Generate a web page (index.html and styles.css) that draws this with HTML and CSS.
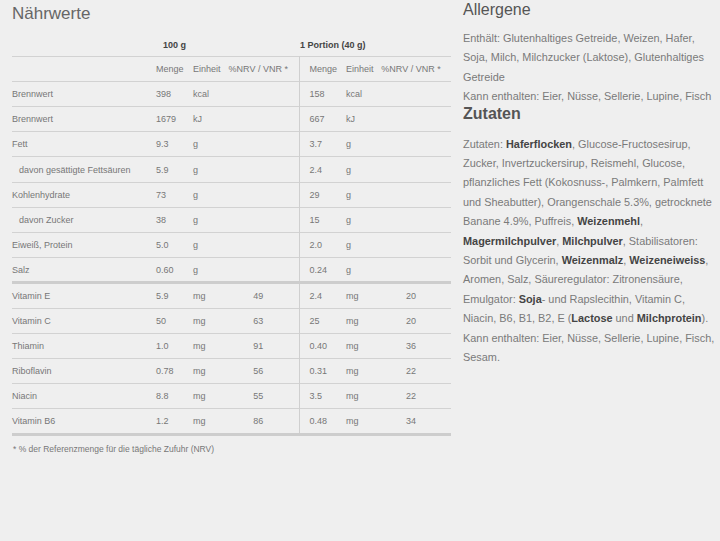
FILE: index.html
```html
<!DOCTYPE html>
<html lang="de">
<head>
<meta charset="utf-8">
<link rel="stylesheet" href="styles.css">
</head>
<body>
<div class="page">
  <section class="nutrition">
    <h2 class="title">Nährwerte</h2>
    <table class="ntable">
      <colgroup>
        <col class="c1"><col class="c2"><col class="c3"><col class="c4"><col class="c5"><col class="c6"><col class="c7">
      </colgroup>
      <thead>
        <tr class="top">
          <th></th>
          <th colspan="3" class="h100">100 g</th>
          <th colspan="3" class="hpor">1 Portion (40 g)</th>
        </tr>
        <tr class="sub">
          <td></td>
          <td class="m">Menge</td><td class="u">Einheit</td><td class="n">%NRV / VNR *</td>
          <td class="m2">Menge</td><td class="u">Einheit</td><td class="n">%NRV / VNR *</td>
        </tr>
      </thead>
      <tbody>
        <tr><td>Brennwert</td><td class="m">398</td><td class="u">kcal</td><td class="n"></td><td class="m2">158</td><td class="u">kcal</td><td class="n"></td></tr>
        <tr><td>Brennwert</td><td class="m">1679</td><td class="u">kJ</td><td class="n"></td><td class="m2">667</td><td class="u">kJ</td><td class="n"></td></tr>
        <tr><td>Fett</td><td class="m">9.3</td><td class="u">g</td><td class="n"></td><td class="m2">3.7</td><td class="u">g</td><td class="n"></td></tr>
        <tr><td class="ind">davon gesättigte Fettsäuren</td><td class="m">5.9</td><td class="u">g</td><td class="n"></td><td class="m2">2.4</td><td class="u">g</td><td class="n"></td></tr>
        <tr><td>Kohlenhydrate</td><td class="m">73</td><td class="u">g</td><td class="n"></td><td class="m2">29</td><td class="u">g</td><td class="n"></td></tr>
        <tr><td class="ind">davon Zucker</td><td class="m">38</td><td class="u">g</td><td class="n"></td><td class="m2">15</td><td class="u">g</td><td class="n"></td></tr>
        <tr><td>Eiweiß, Protein</td><td class="m">5.0</td><td class="u">g</td><td class="n"></td><td class="m2">2.0</td><td class="u">g</td><td class="n"></td></tr>
        <tr class="thick"><td>Salz</td><td class="m">0.60</td><td class="u">g</td><td class="n"></td><td class="m2">0.24</td><td class="u">g</td><td class="n"></td></tr>
        <tr><td>Vitamin E</td><td class="m">5.9</td><td class="u">mg</td><td class="n">49</td><td class="m2">2.4</td><td class="u">mg</td><td class="n">20</td></tr>
        <tr><td>Vitamin C</td><td class="m">50</td><td class="u">mg</td><td class="n">63</td><td class="m2">25</td><td class="u">mg</td><td class="n">20</td></tr>
        <tr><td>Thiamin</td><td class="m">1.0</td><td class="u">mg</td><td class="n">91</td><td class="m2">0.40</td><td class="u">mg</td><td class="n">36</td></tr>
        <tr><td>Riboflavin</td><td class="m">0.78</td><td class="u">mg</td><td class="n">56</td><td class="m2">0.31</td><td class="u">mg</td><td class="n">22</td></tr>
        <tr><td>Niacin</td><td class="m">8.8</td><td class="u">mg</td><td class="n">55</td><td class="m2">3.5</td><td class="u">mg</td><td class="n">22</td></tr>
        <tr class="thick"><td>Vitamin B6</td><td class="m">1.2</td><td class="u">mg</td><td class="n">86</td><td class="m2">0.48</td><td class="u">mg</td><td class="n">34</td></tr>
      </tbody>
    </table>
    <p class="foot">* % der Referenzmenge für die tägliche Zufuhr (NRV)</p>
  </section>
  <aside class="info">
    <h2 class="head">Allergene</h2>
    <p class="txt first">Enthält: Glutenhaltiges Getreide, Weizen, Hafer, Soja, Milch, Milchzucker (Laktose), Glutenhaltiges Getreide</p>
    <p class="txt">Kann enthalten: Eier, Nüsse, Sellerie, Lupine, Fisch</p>
    <h2 class="head head2">Zutaten</h2>
    <p class="txt second">Zutaten: <b>Haferflocken</b>, Glucose-Fructosesirup, Zucker, Invertzuckersirup, Reismehl, Glucose, pflanzliches Fett (Kokosnuss-, Palmkern, Palmfett und Sheabutter), Orangenschale 5.3%, getrocknete Banane 4.9%, Puffreis, <b>Weizenmehl</b>, <b>Magermilchpulver</b>, <b>Milchpulver</b>, Stabilisatoren: Sorbit und Glycerin, <b>Weizenmalz</b>, <b>Weizeneiweiss</b>, Aromen, Salz, Säureregulator: Zitronensäure, Emulgator: <b>Soja</b>- und Rapslecithin, Vitamin C, Niacin, B6, B1, B2, E (<b>Lactose</b> und <b>Milchprotein</b>). Kann enthalten: Eier, Nüsse, Sellerie, Lupine, Fisch, Sesam.</p>
  </aside>
</div>
</body>
</html>
```
FILE: styles.css
```css
html, body {
  margin: 0;
  padding: 0;
  background: #efefef;
}
body {
  font-family: "Liberation Sans", Arial, sans-serif;
  color: #777;
}
.page {
  display: flex;
  gap: 12px;
  padding: 0 0 0 12px;
}
.nutrition {
  width: 439px;
  flex: none;
}
.title {
  margin: 0;
  padding-top: 4px;
  height: 31px;
  box-sizing: border-box;
  font-size: 17px;
  font-weight: normal;
  color: #666;
  line-height: 20px;
}
.ntable {
  width: 439px;
  border-collapse: collapse;
  table-layout: fixed;
  font-size: 9px;
  color: #777;
}
.c1 { width: 138px; }
.c2 { width: 37px; }
.c3 { width: 36px; }
.c4 { width: 76px; }
.c5 { width: 41px; }
.c6 { width: 36px; }
.c7 { width: 75px; }
.ntable th, .ntable td {
  padding: 0;
  text-align: left;
  white-space: nowrap;
  font-weight: normal;
}
.ntable tr {
  height: 25.2px;
  border-bottom: 1px solid #d2d2d2;
}
.ntable tr.thick {
  border-bottom: 3px solid #cdcdcd;
}
.ntable .top th {
  font-weight: bold;
  color: #444;
  padding-top: 3px;
}
.ntable .h100 { padding-left: 13px; }
.ntable .hpor { padding-left: 1px; }
.ntable .m, .ntable .u { padding-left: 6px; }
.ntable .m2 {
  padding-left: 10px;
  border-left: 1px solid #cfcfcf;
}
.ntable .n { text-align: center; padding-right: 5px; }
.ntable .ind { padding-left: 7px; }
.foot {
  margin: 8px 0 0 1px;
  font-size: 8.5px;
  color: #777;
}
.info {
  width: 256px;
  flex: none;
}
.head {
  margin: 0;
  padding-top: 1px;
  font-size: 16px;
  font-weight: normal;
  color: #555;
  line-height: 18px;
}
.head2 {
  padding-top: 0;
  line-height: 14px;
  font-weight: bold;
}
.txt {
  margin: 0;
  font-size: 10.9px;
  line-height: 19.4px;
  color: #7a7a7a;
}
.txt.first { margin-top: 10px; }
.txt.second { margin-top: 14px; }
.txt b {
  color: #444;
  font-weight: bold;
}
```
